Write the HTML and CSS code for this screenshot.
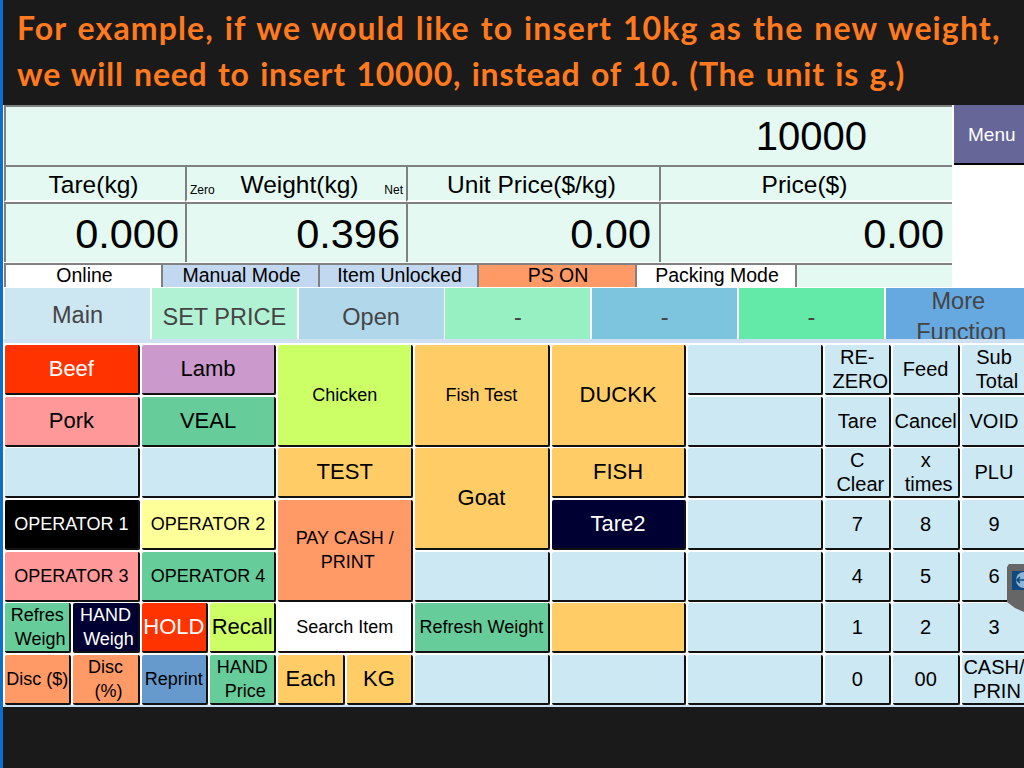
FILE: index.html
```html
<!doctype html>
<html lang="en">
  <head>
    <meta charset="UTF-8" />
    <meta name="viewport" content="width=device-width, initial-scale=1.0" />
    <title>Scale POS - insert new weight</title>
    <link rel="stylesheet" href="styles.css">
  </head>
  <body>
    <div class="slide">
      <header class="caption">
        <p class="caption-wide">For example, if we would like to insert 10kg as the new weight,</p>
        <p>we will need to insert 10000, instead of 10. (The unit is g.)</p>
      </header>

      <main class="screen">
        <div class="entry-row">
          <div class="entry">10000</div>
          <button class="menu">Menu</button>
        </div>

        <div class="readout">
          <div class="label">Tare(kg)</div>
          <div class="label label-weight"><small>Zero</small><span>Weight(kg)</span><small>Net</small></div>
          <div class="label">Unit Price($/kg)</div>
          <div class="label">Price($)</div>
          <div class="value">0.000</div>
          <div class="value">0.396</div>
          <div class="value value-money">0.00</div>
          <div class="value value-money">0.00</div>
        </div>

        <div class="status">
          <div class="flag flag-white">Online</div>
          <div class="flag flag-blue">Manual Mode</div>
          <div class="flag flag-blue">Item Unlocked</div>
          <div class="flag flag-orange">PS ON</div>
          <div class="flag flag-white">Packing Mode</div>
          <div class="flag flag-mint"></div>
        </div>

        <nav class="tabs">
          <div class="tab tab-main">Main</div>
          <div class="tab tab-price">SET PRICE</div>
          <div class="tab tab-open">Open</div>
          <div class="tab tab-a">-</div>
          <div class="tab tab-b">-</div>
          <div class="tab tab-c">-</div>
          <div class="tab tab-more"><span>More</span><span class="line2">Function</span></div>
        </nav>

        <div class="keys">
          <!-- row 1 -->
          <button class="key w2 lg red">Beef</button>
          <button class="key w2 lg purple">Lamb</button>
          <button class="key w2 h2 lime">Chicken</button>
          <button class="key w2 h2 orange">Fish Test</button>
          <button class="key w2 h2 lg orange">DUCKK</button>
          <button class="key w2"></button>
          <button class="key md"><span>RE-</span><span class="line2">ZERO</span></button>
          <button class="key md">Feed</button>
          <button class="key md"><span>Sub</span><span class="line2">Total</span></button>

          <!-- row 2 -->
          <button class="key w2 lg pink">Pork</button>
          <button class="key w2 lg green">VEAL</button>
          <button class="key w2"></button>
          <button class="key md">Tare</button>
          <button class="key md">Cancel</button>
          <button class="key md">VOID</button>

          <!-- row 3 -->
          <button class="key w2"></button>
          <button class="key w2"></button>
          <button class="key w2 lg orange">TEST</button>
          <button class="key w2 h2 lg orange">Goat</button>
          <button class="key w2 lg orange">FISH</button>
          <button class="key w2"></button>
          <button class="key md"><span>C</span><span class="line2">Clear</span></button>
          <button class="key md"><span>x</span><span class="line2">times</span></button>
          <button class="key md">PLU</button>

          <!-- row 4 -->
          <button class="key w2 black">OPERATOR 1</button>
          <button class="key w2 yellow">OPERATOR 2</button>
          <button class="key w2 h2 salmon"><span>PAY CASH /</span><span class="line2">PRINT</span></button>
          <button class="key w2 lg navy">Tare2</button>
          <button class="key w2"></button>
          <button class="key md">7</button>
          <button class="key md">8</button>
          <button class="key md">9</button>

          <!-- row 5 -->
          <button class="key w2 pink">OPERATOR 3</button>
          <button class="key w2 green">OPERATOR 4</button>
          <button class="key w2"></button>
          <button class="key w2"></button>
          <button class="key w2"></button>
          <button class="key md">4</button>
          <button class="key md">5</button>
          <button class="key md">6</button>

          <!-- row 6 -->
          <button class="key green"><span>Refres</span><span class="line2">Weigh</span></button>
          <button class="key navy"><span>HAND</span><span class="line2">Weigh</span></button>
          <button class="key lg red">HOLD</button>
          <button class="key lg lime">Recall</button>
          <button class="key w2 white">Search Item</button>
          <button class="key w2 green">Refresh Weight</button>
          <button class="key w2 orange"></button>
          <button class="key w2"></button>
          <button class="key md">1</button>
          <button class="key md">2</button>
          <button class="key md">3</button>

          <!-- row 7 -->
          <button class="key salmon">Disc ($)</button>
          <button class="key salmon"><span>Disc</span><span class="line2">(%)</span></button>
          <button class="key steel">Reprint</button>
          <button class="key green"><span>HAND</span><span class="line2">Price</span></button>
          <button class="key lg orange">Each</button>
          <button class="key lg orange">KG</button>
          <button class="key w2"></button>
          <button class="key w2"></button>
          <button class="key w2"></button>
          <button class="key md">0</button>
          <button class="key md">00</button>
          <button class="key md"><span>CASH/</span><span class="line2">PRIN</span></button>
        </div>
      </main>

      <!-- remote control side handle, sits over the keypad -->
      <svg class="handle" width="17" height="50" viewBox="0 0 17 50">
        <path d="M2 0H17V48L8 44L0 38V3Z" fill="#666" />
        <rect x="5" y="7" width="12" height="19" fill="#0e4a80" />
        <circle cx="17" cy="16" r="8" fill="#8fb4d4" />
        <path d="M17 16H10M13 13L10 16L13 19" fill="none" stroke="#0e4a80" stroke-width="1.6" />
      </svg>
    </div>
  </body>
</html>
```

FILE: styles.css
```css
* {
  box-sizing: border-box;
}
html,
body {
  margin: 0;
  height: 100%;
  overflow: hidden;
}
body {
  background: #1a1a1a;
  font-family: "Liberation Sans", Arial, sans-serif;
  color: #000;
}
.slide {
  position: relative;
  width: 1024px;
  height: 768px;
  overflow: hidden;
  border-left: 3px solid #0b6fd0;
}

/* caption on top */
.caption {
  height: 105px;
  padding: 5px 0 0 14px;
  color: #ff7a1f;
  font-family: Lato, sans-serif;
  font-weight: 700;
  font-size: 32px;
  line-height: 46px;
  letter-spacing: 0.75px;
  word-spacing: 2px;
  white-space: nowrap;
}
.caption p {
  margin: 0;
}
.caption-wide {
  letter-spacing: 1.13px;
}

.screen {
  height: 602px;
  width: 1021px;
  background: #fff;
  padding-left: 1px;
  overflow: hidden;
}

/* entry line + menu */
.entry-row {
  display: flex;
  height: 60px;
  width: 1040px;
}
.entry {
  width: 948px;
  background: #e4f9f1;
  border-top: 2px solid #808080;
  border-left: 2px solid #808080;
  font-size: 40px;
  line-height: 59px;
  text-align: right;
  padding-right: 85px;
}
.menu {
  width: 90px;
  margin-left: 2px;
  background: #666699;
  color: #fff;
  font: 19px "Liberation Sans", Arial, sans-serif;
  border: none;
  border-bottom: 2px solid #000;
  text-align: left;
  padding: 2px 0 0 14px;
}

/* tare / weight / price */
.readout {
  display: grid;
  grid-template-columns: 181px 221px 253px 293px;
  grid-template-rows: 37px 60px;
  width: 948px;
}
.label,
.value {
  background: #e4f9f1;
  border-top: 2px solid #808080;
  border-left: 2px solid #808080;
  border-bottom: 2px solid #fff;
}
.label {
  font-size: 24.5px;
  line-height: 35px;
  text-align: center;
  padding-right: 4px;
}
.label-weight {
  display: flex;
  justify-content: space-between;
  padding: 0 3px;
}
.label-weight small {
  font-size: 12px;
  line-height: 12px;
  align-self: flex-end;
  padding-bottom: 4px;
}
.value {
  font-size: 41.5px;
  line-height: 59px;
  text-align: right;
  padding-right: 6px;
  border-bottom: none;
}
.value-money {
  padding-right: 8px;
}

/* status flags */
.status {
  display: grid;
  grid-template-columns: 157px 157px 159px 158px 160px 157px;
  width: 948px;
  height: 24px;
  margin-top: 1px;
}
.flag {
  border-top: 2px solid #808080;
  border-left: 2px solid #808080;
  font-size: 19.5px;
  line-height: 21px;
  text-align: center;
  overflow: hidden;
  padding-left: 2px;
}
.flag-white {
  background: #fff;
}
.flag-blue {
  background: #c2d8f0;
}
.flag-orange {
  background: #ff9966;
}
.flag-mint {
  background: #e4f9f1;
}

/* function tabs */
.tabs {
  display: flex;
  gap: 1.8px;
  height: 56px;
  padding: 1px 0 0 1px;
  background: #fff;
  border-bottom: 4px solid #cfe0f2;
}
.tab {
  flex: 0 0 145px;
  height: 51px;
  overflow: hidden;
  display: flex;
  flex-direction: column;
  align-items: center;
  justify-content: center;
  font-size: 23.5px;
  line-height: 31px;
  color: #444;
  padding-top: 7px;
}
.tab-main {
  background: #cce6f2;
  padding-top: 4px;
}
.tab-price {
  background: #b2f2d4;
}
.tab-open {
  background: #b0d8ea;
}
.tab-a {
  background: #96f0c2;
}
.tab-b {
  background: #7dc5df;
}
.tab-c {
  background: #63eaa8;
}
.tab-more {
  background: #66a8e0;
  padding-top: 6px;
}

/* keypad, half width columns */
.keys {
  display: grid;
  grid-template-columns: repeat(15, 66.35px);
  grid-auto-rows: 50px;
  gap: 1.7px 2px;
  padding: 2px 0 0 1px;
  width: 1040px;
  height: 364px;
  background: #fff;
  border-bottom: 2px solid #cfe0f2;
}
.key {
  display: flex;
  flex-direction: column;
  align-items: center;
  justify-content: center;
  padding: 0;
  overflow: hidden;
  background: #cce8f3;
  border: none;
  border-right: 2px solid #111;
  border-bottom: 2px solid #111;
  border-radius: 2px;
  color: #000;
  font: 18px/24px "Liberation Sans", Arial, sans-serif;
  white-space: nowrap;
}
.line2 {
  margin-left: 6px;
}
.w2 {
  grid-column: span 2;
}
.h2 {
  grid-row: span 2;
}
.md {
  font-size: 20px;
}
.lg {
  font-size: 22px;
}
.red {
  background: #ff3300;
  color: #fff;
}
.purple {
  background: #cc99cc;
}
.lime {
  background: #ccff66;
}
.orange {
  background: #ffcc66;
}
.pink {
  background: #ff9999;
}
.green {
  background: #66cc99;
}
.yellow {
  background: #ffff99;
}
.salmon {
  background: #ff9966;
}
.steel {
  background: #6699cc;
}
.white {
  background: #fff;
}
.black {
  background: #000;
  color: #fff;
}
.navy {
  background: #000033;
  color: #fff;
}

.handle {
  position: absolute;
  top: 564px;
  left: 1004px;
}
```
